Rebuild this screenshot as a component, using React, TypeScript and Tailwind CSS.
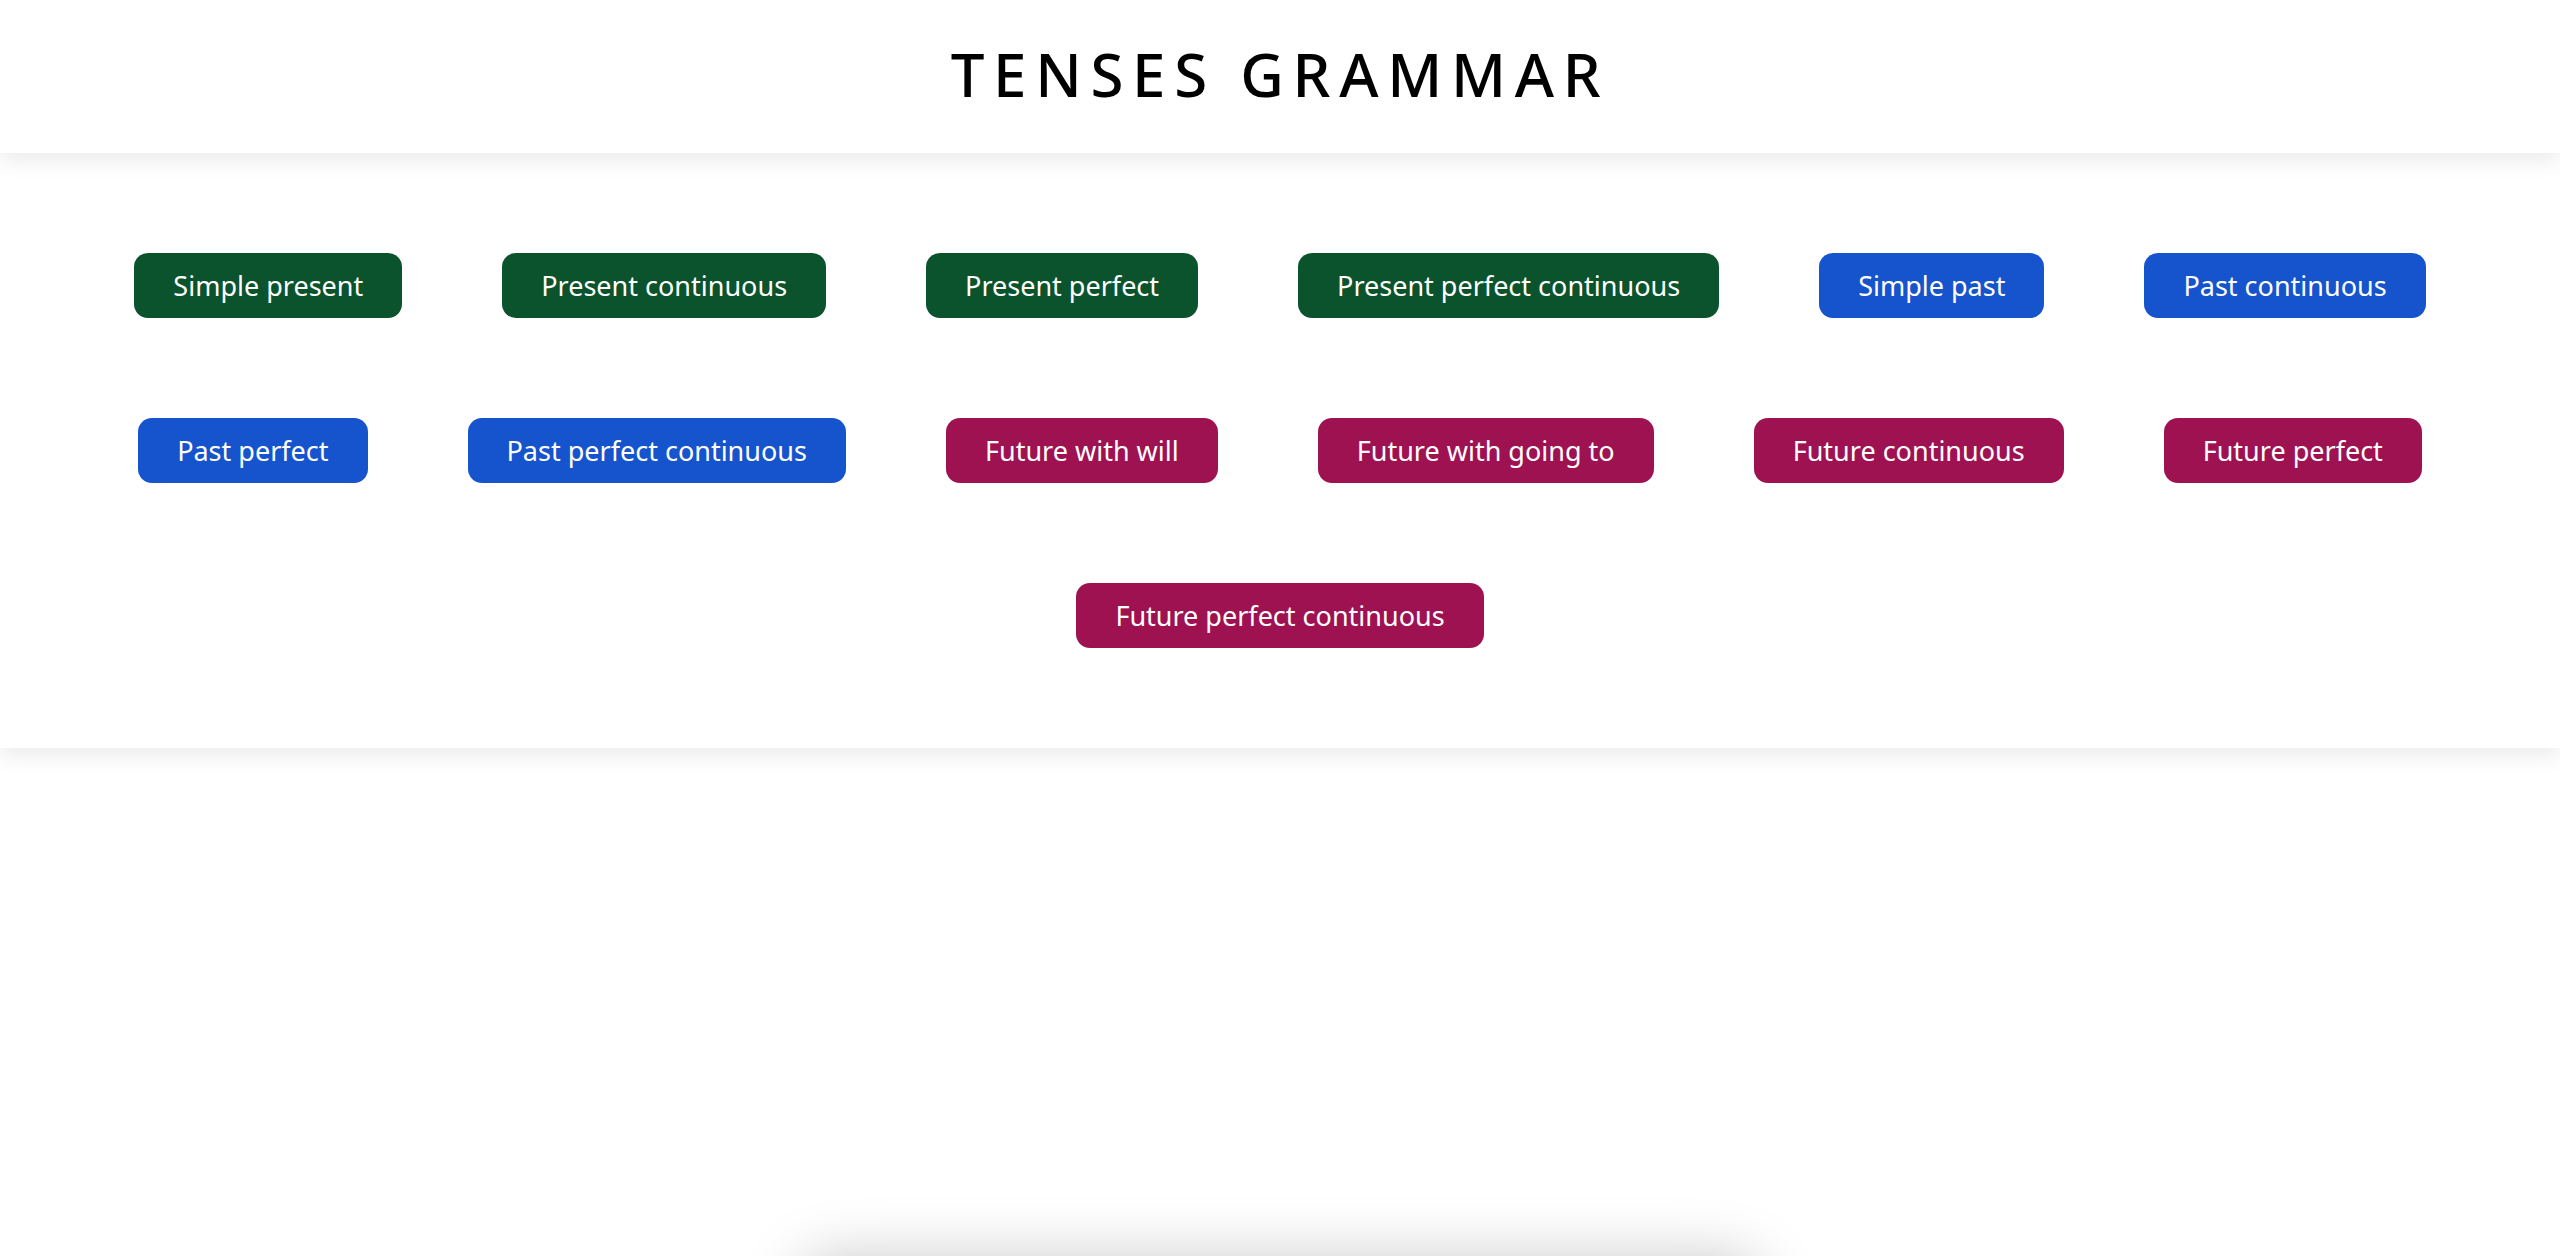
import React from 'react';

const tenses = [
  { label: 'Simple present', tone: 'present' },
  { label: 'Present continuous', tone: 'present' },
  { label: 'Present perfect', tone: 'present' },
  { label: 'Present perfect continuous', tone: 'present' },
  { label: 'Simple past', tone: 'past' },
  { label: 'Past continuous', tone: 'past' },
  { label: 'Past perfect', tone: 'past' },
  { label: 'Past perfect continuous', tone: 'past' },
  { label: 'Future with will', tone: 'future' },
  { label: 'Future with going to', tone: 'future' },
  { label: 'Future continuous', tone: 'future' },
  { label: 'Future perfect', tone: 'future' },
  { label: 'Future perfect continuous', tone: 'future' },
];

const toneClass: Record<string, string> = {
  present: 'bg-[#0a532c]',
  past: 'bg-[#1554cc]',
  future: 'bg-[#9e1251]',
};

const App = () => {
  return (
    <div className="min-h-screen bg-white font-['Noto_Sans',sans-serif] overflow-hidden">
      {/* Header */}
      <header className="relative z-10 h-[153px] pb-[6px] flex items-center justify-center bg-white shadow-[0_8px_20px_rgba(0,0,0,0.08)]">
        <h1 className="text-[60px] font-medium tracking-[0.145em] text-black leading-none">TENSES GRAMMAR</h1>
      </header>

      {/* Tense buttons */}
      <section className="bg-white p-[50px] flex flex-wrap justify-center shadow-[0_8px_20px_rgba(0,0,0,0.08)]">
        {tenses.map((t) => (
          <button
            key={t.label}
            className={`m-[50px] h-[65px] px-[39px] rounded-[14px] text-white text-[27px] leading-none ${toneClass[t.tone]}`}
          >
            {t.label}
          </button>
        ))}
      </section>

      {/* Card peeking from below the fold */}
      <div className="mt-[510px] mx-auto w-[960px] h-[300px] bg-white rounded-[30px] shadow-[0_0_60px_rgba(0,0,0,0.22)]" />
    </div>
  );
};

export default App;
